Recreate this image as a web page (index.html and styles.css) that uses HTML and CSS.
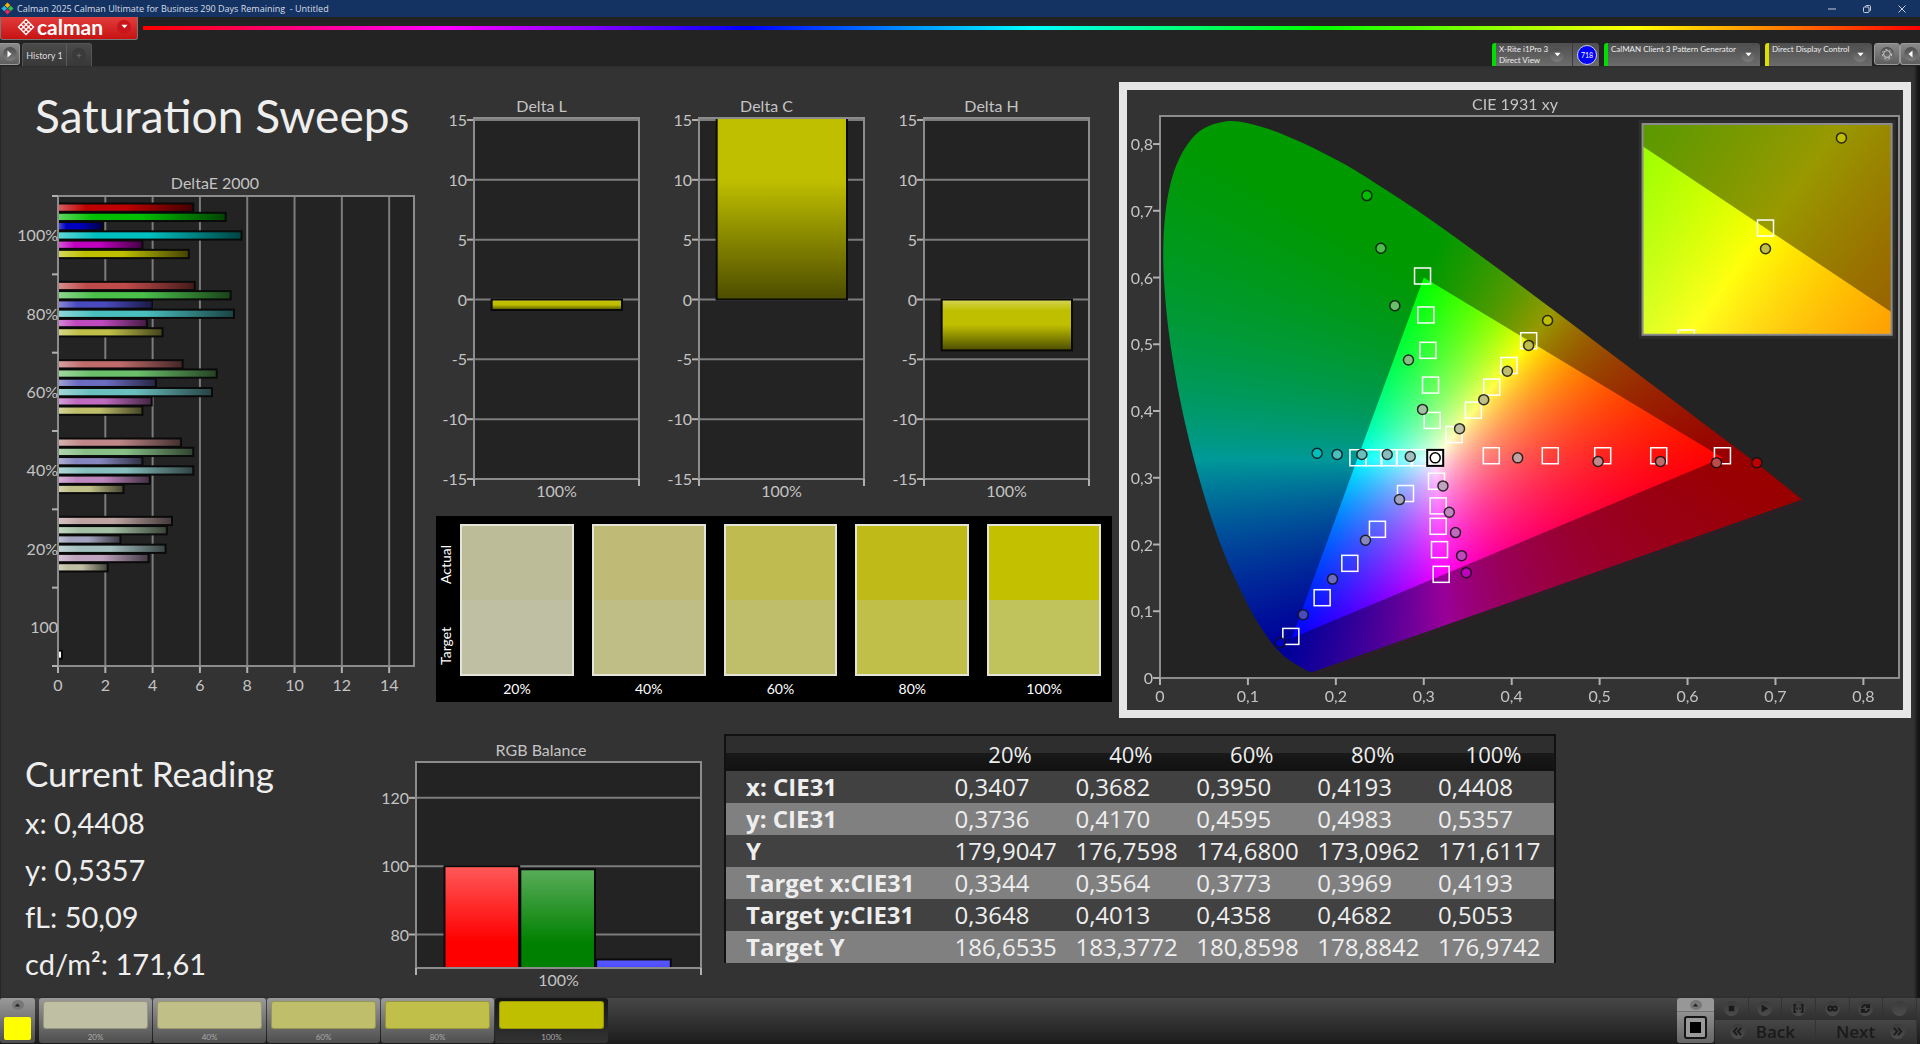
FILE: index.html
```
<!DOCTYPE html>
<html lang="en">
<head>
    <meta charset="UTF-8">
    <meta name="viewport" content="width=device-width, initial-scale=1.0">
    <title>Calman - Saturation Sweeps</title>
    <link rel="stylesheet" href="styles.css">
</head>
<body>
    <svg class="defs" aria-hidden="true">
        <defs>
            <linearGradient id="glossH" x1="0" y1="0" x2="1" y2="0">
                <stop offset="0" stop-color="#fff" stop-opacity="0.4"/>
                <stop offset="0.22" stop-color="#fff" stop-opacity="0"/>
                <stop offset="0.5" stop-color="#000" stop-opacity="0"/>
                <stop offset="1" stop-color="#000" stop-opacity="0.65"/>
            </linearGradient>
            <linearGradient id="glossV" x1="0" y1="0" x2="0" y2="1">
                <stop offset="0" stop-color="#fff" stop-opacity="0.35"/>
                <stop offset="0.22" stop-color="#fff" stop-opacity="0"/>
                <stop offset="0.5" stop-color="#000" stop-opacity="0"/>
                <stop offset="1" stop-color="#000" stop-opacity="0.6"/>
            </linearGradient>
        </defs>
    </svg>

    <header>
        <div class="titlebar">
            <svg class="app-icon" viewBox="0 0 14 14" aria-hidden="true">
                <path d="M7 0.500 10 3.500 7 6.500 4 3.500Z" fill="#f2b705"/>
                <path d="M10.500 4 13.500 7 10.500 10 7.500 7Z" fill="#2fc24a"/>
                <path d="M3.500 4 6.500 7 3.500 10 0.500 7Z" fill="#22b8e6"/>
                <path d="M7 7.500 10 10.500 7 13.500 4 10.500Z" fill="#e8265c"/>
            </svg>
            <span class="titlebar-text">Calman 2025 Calman Ultimate for Business 290 Days Remaining &nbsp;- Untitled</span>
            <div class="window-buttons">
                <button aria-label="Minimize"><svg viewBox="0 0 10 10"><path d="M1 5H9"/></svg></button>
                <button aria-label="Restore"><svg viewBox="0 0 10 10"><rect x="1.500" y="3" width="5.500" height="5.500" rx="1"/><path d="M3.500 3V2.500A1 1 0 0 1 4.500 1.500H7.500A1 1 0 0 1 8.500 2.500V6A1 1 0 0 1 7.500 7"/></svg></button>
                <button aria-label="Close"><svg viewBox="0 0 10 10"><path d="M1.500 1.500 8.500 8.500M8.500 1.500 1.500 8.500"/></svg></button>
            </div>
        </div>

        <div class="brand-row">
            <button class="brand">
                <svg class="brand-mark" viewBox="0 0 18 18" aria-hidden="true">
                    <path d="M9 0.500 17.500 9 9 17.500 0.500 9Z" fill="#fff"/>
                    <g fill="#dc2626">
                        <circle cx="9" cy="4" r="1.300"/><circle cx="6.500" cy="6.500" r="1.300"/><circle cx="11.500" cy="6.500" r="1.300"/>
                        <circle cx="4" cy="9" r="1.300"/><circle cx="9" cy="9" r="1.300"/><circle cx="14" cy="9" r="1.300"/>
                        <circle cx="6.500" cy="11.500" r="1.300"/><circle cx="11.500" cy="11.500" r="1.300"/><circle cx="9" cy="14" r="1.300"/>
                    </g>
                </svg>
                <span class="brand-name">calman</span>
                <span class="round round-red"><svg viewBox="0 0 8 5"><path d="M0.500 0.500H7.500L4 4.500Z"/></svg></span>
            </button>
            <div class="spectrum"></div>
        </div>

        <div class="tab-row">
            <button class="side-button" aria-label="Expand"><span class="round"><svg class="tall" viewBox="0 0 5 8"><path d="M0.500 0.500V7.500L4.500 4Z"/></svg></span></button>
            <nav class="tabs">
                <button class="tab">History 1</button>
                <button class="tab tab-add" aria-label="Add history"><span class="round round-dim">+</span></button>
            </nav>
            <div class="devices">
                <button class="device device-meter">
                    <span class="device-name">X-Rite i1Pro 3<br>Direct View</span>
                    <span class="round"><svg viewBox="0 0 8 5"><path d="M0.500 0.500H7.500L4 4.500Z"/></svg></span>
                </button>
                <span class="badge-box"><span class="badge">718</span></span>
                <button class="device device-source">
                    <span class="device-name">CalMAN Client 3 Pattern Generator</span>
                    <span class="round"><svg viewBox="0 0 8 5"><path d="M0.500 0.500H7.500L4 4.500Z"/></svg></span>
                </button>
                <button class="device device-display">
                    <span class="device-name">Direct Display Control</span>
                    <span class="round"><svg viewBox="0 0 8 5"><path d="M0.500 0.500H7.500L4 4.500Z"/></svg></span>
                </button>
                <button class="side-button gear" aria-label="Settings"><span class="round"><svg class="gear-icon" viewBox="0 0 12 12"><circle cx="6" cy="6" r="3.400"/><circle class="teeth" cx="6" cy="6" r="4.700"/></svg></span></button>
                <button class="side-button edge" aria-label="Collapse"><span class="round"><svg class="tall" viewBox="0 0 5 8"><path d="M4.500 0.500V7.500L0.500 4Z"/></svg></span></button>
            </div>
        </div>
    </header>

    <main class="workspace">
        <div class="row-top">
            <section class="sweeps">
                <h1>Saturation Sweeps</h1>
                <svg class="chart" id="deltaE"></svg>
            </section>

            <section class="deltas">
                <div class="delta-charts">
                    <svg class="chart" id="deltaL"></svg>
                    <svg class="chart" id="deltaC"></svg>
                    <svg class="chart" id="deltaH"></svg>
                </div>
                <div class="compare">
                    <div class="compare-labels"><span>Actual</span><span>Target</span></div>
                    <div class="compare-list" id="compareList"></div>
                </div>
            </section>

            <section class="cie">
                <canvas id="cieCanvas"></canvas>
                <svg class="chart" id="cieChart"></svg>
            </section>
        </div>

        <div class="row-bottom">
            <section class="reading">
                <h2>Current Reading</h2>
                <p>x: 0,4408</p>
                <p>y: 0,5357</p>
                <p>fL: 50,09</p>
                <p>cd/m²: 171,61</p>
            </section>

            <section class="balance">
                <svg class="chart" id="rgbBalance"></svg>
            </section>

            <table class="data">
                <thead>
                    <tr><td></td><th scope="col">20%</th><th scope="col">40%</th><th scope="col">60%</th><th scope="col">80%</th><th scope="col">100%</th></tr>
                </thead>
                <tbody>
                    <tr><th scope="row">x: CIE31</th><td>0,3407</td><td>0,3682</td><td>0,3950</td><td>0,4193</td><td>0,4408</td></tr>
                    <tr><th scope="row">y: CIE31</th><td>0,3736</td><td>0,4170</td><td>0,4595</td><td>0,4983</td><td>0,5357</td></tr>
                    <tr><th scope="row">Y</th><td>179,9047</td><td>176,7598</td><td>174,6800</td><td>173,0962</td><td>171,6117</td></tr>
                    <tr><th scope="row">Target x:CIE31</th><td>0,3344</td><td>0,3564</td><td>0,3773</td><td>0,3969</td><td>0,4193</td></tr>
                    <tr><th scope="row">Target y:CIE31</th><td>0,3648</td><td>0,4013</td><td>0,4358</td><td>0,4682</td><td>0,5053</td></tr>
                    <tr><th scope="row">Target Y</th><td>186,6535</td><td>183,3772</td><td>180,8598</td><td>178,8842</td><td>176,9742</td></tr>
                </tbody>
            </table>
        </div>
    </main>

    <footer>
        <button class="current-color" aria-label="Current colour">
            <span class="mini-up"><svg viewBox="0 0 8 5"><path d="M0.500 4.500H7.500L4 0.500Z"/></svg></span>
            <span class="current-swatch"></span>
        </button>
        <div class="levels" id="levels"></div>
        <div class="transport">
            <button class="pattern" aria-label="Pattern window">
                <span class="mini-up"><svg viewBox="0 0 8 5"><path d="M0.500 4.500H7.500L4 0.500Z"/></svg></span>
                <span class="pattern-icon"></span>
            </button>
            <div class="transport-grid">
                <button aria-label="Stop"><span class="knob"><svg viewBox="0 0 12 12"><path d="M3 3H9V9H3Z"/></svg></span></button>
                <button aria-label="Play"><span class="knob"><svg viewBox="0 0 12 12"><path d="M3 2 10 6 3 10Z"/></svg></span></button>
                <button aria-label="Read series"><span class="knob"><svg class="line" viewBox="0 0 12 12"><path d="M3.500 2H1.500V10H3.500M8.500 2H10.500V10H8.500M3.500 6H5M7 6H8.500"/></svg></span></button>
                <button aria-label="Continuous"><span class="knob"><svg class="line" viewBox="0 0 12 12"><circle cx="3.500" cy="6" r="2.200"/><circle cx="8.500" cy="6" r="2.200"/></svg></span></button>
                <button aria-label="Refresh"><span class="knob"><svg class="line" viewBox="0 0 12 12"><path d="M2 5.500A4 4 0 0 1 9 3.500M10 1V4.500H6.500M10 6.500A4 4 0 0 1 3 8.500M2 11V7.500H5.500"/></svg></span></button>
                <button aria-label="Record"><span class="knob"></span></button>
                <button class="step"><span class="knob"><svg class="line" viewBox="0 0 12 12"><path d="M5.500 2 2 6 5.500 10M10 2 6.500 6 10 10"/></svg></span>Back</button>
                <button class="step">Next<span class="knob"><svg class="line" viewBox="0 0 12 12"><path d="M2 2 5.500 6 2 10M6.500 2 10 6 6.500 10"/></svg></span></button>
            </div>
        </div>
    </footer>

    <script src="charts.js"></script>
</body>
</html>
```
FILE: styles.css
```
:root {
    --bg: #333;
    --bg-dark: #232323;
    --label: #c4c4c4;
    --text: #eee;
}

* {
    margin: 0;
    padding: 0;
    box-sizing: border-box;
}

body {
    display: flex;
    flex-direction: column;
    height: 100vh;
    min-height: 900px;
    background: var(--bg);
    color: var(--text);
    font-family: Lato, "Open Sans", sans-serif;
}

button {
    border: none;
    background: none;
    color: inherit;
    font-family: inherit;
    cursor: pointer;
}

.defs {
    position: absolute;
    width: 0;
    height: 0;
}

/* window chrome */
header {
    flex: none;
    background: var(--bg-dark);
}

.titlebar {
    display: flex;
    align-items: center;
    height: 17px;
    padding-left: 1px;
    background: #143362;
    font: 9px "Open Sans", sans-serif;
    color: #d8dde6;
}

.app-icon {
    width: 13px;
    height: 13px;
    margin-right: 3px;
}

.window-buttons {
    display: flex;
    margin-left: auto;
    padding-right: 1px;
}

.window-buttons button {
    display: flex;
    align-items: center;
    justify-content: center;
    width: 35px;
    height: 17px;
}

.window-buttons svg {
    width: 10px;
    height: 10px;
    fill: none;
    stroke: #c8cfdb;
}

.brand-row {
    display: flex;
    height: 26px;
}

.brand {
    display: flex;
    align-items: center;
    width: 138px;
    height: 23px;
    padding: 0 6px 3px 16px;
    border: 1px solid #777;
    border-top: none;
    border-radius: 0 0 3px 3px;
    background: linear-gradient(#e23c3c, #c81212);
}

.brand-mark {
    width: 18px;
    height: 18px;
}

.brand-name {
    margin-left: 2px;
    font-size: 21px;
    line-height: 20px;
    font-weight: bold;
    color: #fff;
}

.spectrum {
    flex: 1;
    height: 4px;
    margin: 9px 0 0 5px;
    background: linear-gradient(90deg, #f00, #f0f 17%, #00f 34%, #0ff 50%, #0f0 66%, #ff0 84%, #f00);
}

.round {
    display: flex;
    flex: none;
    align-items: center;
    justify-content: center;
    width: 14px;
    height: 14px;
    border-radius: 50%;
    background: linear-gradient(#4c4c4c, #7d7d7d);
}

.round svg {
    width: 7px;
    height: 5px;
    fill: #fff;
}

.round svg.tall {
    width: 5px;
    height: 8px;
}

.round svg.gear-icon {
    width: 12px;
    height: 12px;
    fill: none;
    stroke: #ccc;
    stroke-width: 1;
}

.gear-icon .teeth {
    stroke-dasharray: 2 2;
}

.round-red {
    margin-left: auto;
    background: #c9151c;
}

.round-dim {
    background: #3a3a3a;
    color: #777;
    font-size: 10px;
}

.tab-row {
    display: flex;
    height: 23px;
}

.side-button {
    display: flex;
    align-items: center;
    justify-content: center;
    width: 20px;
    height: 22px;
    border: 1px solid #999;
    border-left: none;
    border-radius: 0 3px 3px 0;
    background: linear-gradient(#8a8a8a, #5e5e5e);
}

.side-button.gear {
    width: 26px;
    border-left: 1px solid #999;
    border-radius: 3px;
}

.side-button.edge {
    border-left: 1px solid #999;
    border-right: none;
    border-radius: 3px 0 0 3px;
}

.tabs {
    display: flex;
    margin-left: 2px;
    border: 1px solid #555;
    border-bottom: none;
    border-radius: 3px 3px 0 0;
    background: linear-gradient(#4a4a4a, #383838);
}

.tab {
    width: 43px;
    font-size: 9px;
    color: #ddd;
    white-space: nowrap;
}

.tab-add {
    display: flex;
    align-items: center;
    justify-content: center;
    width: 25px;
    border-left: 1px solid #5c5c5c;
}

.devices {
    display: flex;
    margin-left: auto;
}

.device {
    display: flex;
    align-items: center;
    height: 23px;
    border-left: 4px solid #0d0;
    border-radius: 3px 3px 0 0;
    background: linear-gradient(#4e4e4e, #6c6c6c);
    font-size: 8px;
    line-height: 11px;
    text-align: left;
    color: #eee;
}

.device-name {
    align-self: flex-start;
    flex: 1;
    padding: 1px 0 0 3px;
    white-space: nowrap;
}

.device .round {
    margin-right: 5px;
}

.device-meter {
    width: 80px;
    border-radius: 3px 0 0 0;
}

.device-meter .round {
    margin-right: 8px;
}

.device-source {
    width: 156px;
    margin: 0 5px;
}

.device-display {
    width: 107px;
    margin-right: 2px;
    border-color: #dd0;
}

.badge-box {
    display: flex;
    align-items: center;
    justify-content: center;
    width: 27px;
    padding-left: 2px;
    border-left: 1px solid #3c3c3c;
    border-radius: 0 3px 0 0;
    background: linear-gradient(#4e4e4e, #6c6c6c);
}

.badge {
    width: 20px;
    height: 20px;
    border: 1px solid #ccd;
    border-radius: 50%;
    background: #00f;
    font-size: 7px;
    line-height: 18px;
    text-align: center;
    color: #fff;
}

/* workspace */
.workspace {
    display: grid;
    flex: 1;
    grid-template-rows: minmax(0, 656fr) minmax(0, 276fr);
    min-height: 0;
    border-left: 1px solid #262626;
    box-shadow: inset -5px 0 3px -1px #151515;
}

.row-top {
    display: grid;
    grid-template-columns: minmax(0, 428fr) minmax(0, 690fr) minmax(0, 792fr);
    grid-template-rows: minmax(0, 1fr);
    padding-right: 9px;
}

.chart {
    display: block;
    width: 100%;
    height: 100%;
    font-size: 16px;
    fill: var(--label);
}

.sweeps,
.deltas {
    display: flex;
    flex-direction: column;
    min-height: 0;
}

.sweeps h1 {
    height: 94px;
    padding: 23px 0 0 34px;
    font-size: 46px;
    line-height: 54px;
    font-weight: normal;
    white-space: nowrap;
}

.sweeps .chart {
    flex: 1;
    height: 0;
}

.delta-charts {
    display: grid;
    flex: 450;
    grid-template-columns: repeat(3, 1fr);
    grid-template-rows: minmax(0, 1fr);
    min-height: 0;
    padding-right: 15px;
}

.compare {
    display: flex;
    flex: 178;
    margin: 0 7px 20px;
    padding: 8px 11px 0 0;
    background: #000;
    color: #fff;
}

.compare-labels {
    display: flex;
    flex-direction: row-reverse;
    justify-content: space-around;
    width: 24px;
    padding-top: 16px;
    font-size: 14px;
    line-height: 20px;
    writing-mode: vertical-rl;
    transform: rotate(180deg);
}

.compare-list {
    display: grid;
    flex: 1;
    grid-template-columns: repeat(5, 1fr);
    gap: 18px;
}

.compare-item {
    display: flex;
    flex-direction: column;
    font-size: 14px;
    line-height: 26px;
    text-align: center;
}

.compare-swatch {
    display: flex;
    flex: 1;
    flex-direction: column;
    border: 2px solid #e4e4d8;
}

.compare-swatch div {
    flex: 1;
}

.cie {
    position: relative;
    margin: 16px 0 4px;
    border: 8px solid #e6e6e6;
}

.cie canvas,
.cie .chart {
    position: absolute;
    inset: 0;
    width: 100%;
    height: 100%;
}

.row-bottom {
    display: grid;
    grid-template-columns: minmax(0, 368fr) minmax(0, 355fr) minmax(0, 832fr) minmax(0, 364fr);
    grid-template-rows: minmax(0, 1fr);
}

.reading {
    padding: 25px 0 0 24px;
}

.reading h2 {
    font-size: 35px;
    line-height: 52px;
    font-weight: normal;
}

.reading p {
    font-size: 29px;
    line-height: 47px;
}

.balance {
    padding-right: 11px;
}

.data {
    align-self: start;
    width: 100%;
    margin-top: 12px;
    border: 2px solid #111;
    border-bottom: none;
    border-collapse: separate;
    border-spacing: 0;
    table-layout: fixed;
    font: 24px "Open Sans", sans-serif;
}

.data tr {
    height: 32px;
    line-height: 32px;
}

.data thead tr {
    height: 35px;
    background: linear-gradient(#2e2e2e 50%, #191919 50%, #111);
}

.data thead td {
    width: 27%;
}

.data thead th {
    font-size: 22px;
    font-weight: normal;
}

.data tbody tr {
    background: #414141;
}

.data tbody tr:nth-child(even) {
    background: #808080;
}

.data tbody th {
    padding-left: 20px;
    font-size: 24px;
    text-align: left;
    white-space: nowrap;
}

.data tbody td {
    padding-left: 5px;
}

/* bottom bar */
footer {
    display: flex;
    flex: none;
    height: 46px;
    padding-right: 3px;
    background: linear-gradient(#474747, #1c1c1c);
}

.current-color,
.level {
    border-radius: 3px;
    background: linear-gradient(#9a9a9a, #4e4e4e);
}

.current-color {
    display: flex;
    flex-direction: column;
    align-items: center;
    width: 35px;
    height: 45px;
    margin-right: 4px;
    padding-top: 2px;
}

.mini-up {
    display: flex;
    align-items: center;
    justify-content: center;
    width: 12px;
    height: 10px;
    border-radius: 50%;
    background: #777;
}

.mini-up svg {
    width: 7px;
    height: 4px;
    fill: #222;
}

.current-swatch {
    width: 27px;
    height: 23px;
    margin-top: 7px;
    border-radius: 2px;
    background: #ff0;
}

.levels {
    display: flex;
    gap: 1px;
}

.level {
    width: 113px;
    height: 45px;
    padding: 3px 4px 0;
    font-size: 8px;
    line-height: 16px;
    color: #aaa;
}

.level-color {
    display: block;
    height: 28px;
    border: 1px solid rgba(0, 0, 0, 0.2);
    border-radius: 3px;
}

.level.active {
    background: linear-gradient(#151515, #333);
}

.transport {
    display: flex;
    margin-left: auto;
}

.pattern {
    display: flex;
    flex-direction: column;
    align-items: center;
    width: 37px;
    height: 45px;
    margin-right: 1px;
    padding-top: 2px;
    border-radius: 3px;
    background: linear-gradient(#979797 13px, #555 13px, #909090 14px, #656565);
}

.pattern-icon {
    width: 23px;
    height: 23px;
    margin-top: 6px;
    border: 2px solid #151515;
    border-radius: 3px;
    background: linear-gradient(#000, #000) center / 11px 11px no-repeat #999;
}

.transport-grid {
    display: grid;
    grid-template-columns: repeat(6, 1fr);
    grid-template-rows: 22px 24px;
    width: 202px;
}

.transport-grid button {
    display: flex;
    align-items: center;
    justify-content: center;
    border-right: 1px solid #333;
    border-bottom: 1px solid #303030;
    background: linear-gradient(#464646, #303030);
}

.transport-grid .step {
    grid-column: span 3;
    justify-content: space-between;
    padding: 0 20px 0 15px;
    font: 600 17px "Open Sans", sans-serif;
    color: #1a1a1a;
}

.transport-grid .step:last-child {
    padding: 0 11px 0 20px;
}

.knob {
    display: flex;
    align-items: center;
    justify-content: center;
    width: 15px;
    height: 15px;
    border-radius: 50%;
    background: linear-gradient(#3a3a3a, #4c4c4c);
}

.knob svg {
    width: 11px;
    height: 11px;
    fill: #1a1a1a;
}

.knob svg.line {
    fill: none;
    stroke: #1a1a1a;
    stroke-width: 2;
}
```
FILE: charts.js
```
const levels = [20, 40, 60, 80, 100];

// per level: red, green, blue, cyan, magenta, yellow
const deltaE = {
    100: [5.72, 7.09, 1.9, 7.76, 3.57, 5.53],
    80: [5.78, 7.3, 4.0, 7.44, 3.76, 4.42],
    60: [5.27, 6.71, 4.14, 6.51, 3.96, 3.57],
    40: [5.2, 5.72, 3.57, 5.72, 3.88, 2.77],
    20: [4.82, 4.6, 2.64, 4.55, 3.83, 2.1]
};
const channels = [[1, 0, 0], [0, 1, 0], [0, 0, 1], [0, 1, 1], [1, 0, 1], [1, 1, 0]];
const lows = { 100: 0, 80: 74, 60: 107, 40: 135, 20: 163 };

const compare = [
    ['#bcbc98', '#bfbfa3'],
    ['#bfba76', '#bfbe87'],
    ['#bfbb50', '#bfbf6b'],
    ['#bfba17', '#bfbf4a'],
    ['#c3c000', '#c0c35c']
];

const targets = [
    [.3768, .333], [.4439, .333], [.5035, .333], [.5672, .333], [.6397, .333],
    [.3096, .3859], [.3077, .4389], [.3047, .4909], [.3024, .5439], [.2986, .6023],
    [.2792, .2764], [.2473, .2228], [.2159, .1718], [.1844, .1203], [.1488, .0623],
    [.2948, .330], [.2781, .330], [.2607, .330], [.2433, .330], [.2251, .330],
    [.3145, .2948], [.3164, .2578], [.3164, .2273], [.3179, .1923], [.3198, .1553],
    [.3344, .3648], [.3564, .4013], [.3773, .4358], [.3969, .4682], [.4193, .5053]
];

// measured points, same order as channels, 20% first
const measured = [
    [[.4068, .3298], [.4983, .3245], [.5692, .3245], [.6329, .3226], [.6788, .3226]],
    [[.2986, .4024], [.2826, .4764], [.2671, .5578], [.2512, .6439], [.2353, .7228]],
    [[.2724, .2673], [.2337, .2063], [.1962, .1482], [.1628, .0948], [.1366, .0528]],
    [[.2846, .3319], [.2584, .3349], [.2296, .3349], [.2015, .3349], [.1787, .3368]],
    [[.3218, .2878], [.3290, .2483], [.3361, .2179], [.3430, .1833], [.3483, .1578]],
    [[.3407, .3736], [.3682, .4170], [.3950, .4595], [.4193, .4983], [.4408, .5357]]
];

const locus = [
    [.1727, .0087], [.1689, .0100], [.1644, .0130], [.1566, .0190], [.1440, .0297], [.1355, .0399],
    [.1241, .0578], [.1096, .0868], [.0913, .1327], [.0687, .2007], [.0454, .2950],
    [.0235, .4127], [.0082, .5384], [.0039, .6548], [.0139, .7502], [.0389, .8120],
    [.0743, .8338], [.1142, .8262], [.1547, .8059], [.1929, .7816], [.2296, .7543],
    [.3016, .6923], [.3731, .6245], [.4441, .5547], [.5125, .4866], [.5752, .4242],
    [.6270, .3725], [.6658, .3340], [.6915, .3083], [.7303, .2675]
];
const gamut = [[.64, .33], [.3, .6], [.15, .06]];

function shade(channel, level) {
    return `rgb(${channel.map(c => c ? 191 : lows[level]).join(',')})`;
}

function line(x1, y1, x2, y2, color = '#7c7c7c', width = 2) {
    return `<line x1="${x1}" y1="${y1}" x2="${x2}" y2="${y2}" stroke="${color}" stroke-width="${width}"/>`;
}

function text(x, y, label, anchor = 'middle') {
    return `<text x="${x}" y="${y + 5}" text-anchor="${anchor}">${label}</text>`;
}

function bar(x, y, w, h, color, gloss) {
    return `<rect x="${x}" y="${y}" width="${w}" height="${h}" fill="${color}"/>
        <rect x="${x}" y="${y}" width="${w}" height="${h}" fill="${gloss ? `url(#${gloss})` : 'none'}" stroke="#0a0a0a" stroke-width="2"/>`;
}

function plotBox(svg, m) {
    const w = svg.clientWidth, h = svg.clientHeight;
    return { left: m.left, top: m.top, right: w - m.right, bottom: h - m.bottom, mid: w / 2,
        width: w - m.left - m.right, height: h - m.top - m.bottom };
}

function plotRect(b, fill = '#232323') {
    return `<rect x="${b.left}" y="${b.top}" width="${b.width}" height="${b.height}" fill="${fill}"`;
}

function clipTo(id, b) {
    return `<clipPath id="${id}">${plotRect(b)}/></clipPath>`;
}

function drawDeltaE() {
    const svg = document.getElementById('deltaE');
    const b = plotBox(svg, { left: 57, right: 15, top: 36, bottom: 56 });
    const unit = b.width / 15.05;
    const group = b.height / 6;
    const step = group / 8.45;
    let out = plotRect(b) + '/>' + clipTo('clipE', b) + text(b.mid, 24, 'DeltaE 2000');

    for (let v = 0; v <= 14; v += 2) {
        const x = b.left + v * unit;
        out += line(x, b.top, x, b.bottom) + line(x, b.bottom, x, b.bottom + 7, '#b0b0b0');
        out += text(x, b.bottom + 20, v);
    }

    out += '<g clip-path="url(#clipE)">';
    [100, 80, 60, 40, 20].forEach((level, g) => {
        deltaE[level].forEach((v, i) => {
            const y = b.top + g * group + 7.5 + i * step;
            out += bar(b.left - 2, y, v * unit + 2, step - 1, shade(channels[i], level), 'glossH');
        });
    });
    out += bar(b.left, b.top + 5 * group + 63, 4, 8, '#fff');
    out += '</g>' + plotRect(b, 'none') + ' stroke="#8c8c8c" stroke-width="2"/>';

    ['100%', '80%', '60%', '40%', '20%', '100'].forEach((label, g) => {
        out += text(b.left, b.top + (g + 0.5) * group + 1, label, 'end');
    });
    for (let g = 0; g <= 6; g++) {
        out += line(b.left - 6, b.top + g * group, b.left, b.top + g * group, '#b0b0b0');
    }
    svg.innerHTML = out;
}

function drawDelta(id, title, value) {
    const svg = document.getElementById(id);
    const b = plotBox(svg, { left: 45, right: 15, top: 52, bottom: 37 });
    const top = b.top + 2;
    const unit = (b.bottom - top) / 30;
    const zero = top + 15 * unit;
    let out = plotRect(b) + '/>' + clipTo('clip' + id, b) + text(b.mid, 41, title);

    for (let v = -15; v <= 15; v += 5) {
        const y = zero - v * unit;
        out += line(b.left, y, b.right, y) + line(b.left - 7, y, b.left, y, '#b0b0b0');
        out += text(b.left - 7, y + 1, v, 'end');
    }

    const height = Math.abs(value) * unit;
    out += `<g clip-path="url(#clip${id})">` +
        bar(b.left + b.width * 0.107, value > 0 ? zero - height : zero, b.width * 0.79, height, '#bfbf00', 'glossV') + '</g>';
    out += plotRect(b, 'none') + ' stroke="#8c8c8c" stroke-width="2"/>';
    out += line(b.left, b.bottom, b.left, b.bottom + 7, '#b0b0b0') + line(b.right, b.bottom, b.right, b.bottom + 7, '#b0b0b0');
    out += text(b.left + b.width / 2, b.bottom + 13, '100%');
    svg.innerHTML = out;
}

function drawBalance() {
    const svg = document.getElementById('rgbBalance');
    const b = plotBox(svg, { left: 47, right: 12, top: 40, bottom: 30 });
    const unit = b.height / 60.3;
    const toY = v => b.bottom - (v - 70.2) * unit;
    let out = plotRect(b) + '/>' + clipTo('clipB', b) + text(b.mid, 29, 'RGB Balance');

    [120, 100, 80].forEach(v => {
        out += line(b.left, toY(v), b.right, toY(v)) + line(b.left - 7, toY(v), b.left, toY(v), '#b0b0b0');
        out += text(b.left - 7, toY(v) + 1, v, 'end');
    });

    out += '<g clip-path="url(#clipB)">';
    [[100, '#f00'], [99.1, '#008000'], [72.7, '#00f']].forEach(([v, color], i) => {
        out += bar(b.left + b.width * (0.1 + i * 0.266), toY(v), b.width * 0.262, v * unit, color, 'glossV');
    });
    out += '</g>' + plotRect(b, 'none') + ' stroke="#8c8c8c" stroke-width="2"/>';
    out += line(b.left, b.bottom, b.left, b.bottom + 7, '#b0b0b0') + line(b.right, b.bottom, b.right, b.bottom + 7, '#b0b0b0');
    out += text(b.left + b.width / 2, b.bottom + 13, '100%');
    svg.innerHTML = out;
}

// chromaticity colour, brightest channel at full scale
function xyToRgb(x, y) {
    const X = x / y, Z = (1 - x - y) / y;
    const rgb = [
        3.2406 * X - 1.5372 - 0.4986 * Z,
        -0.9689 * X + 1.8758 + 0.0415 * Z,
        0.0557 * X - 0.2040 + 1.0570 * Z
    ].map(c => Math.max(c, 0));
    const max = Math.max(...rgb);
    return rgb.map(c => c / max * 255);
}

function colorField(box, view, gain) {
    const canvas = document.createElement('canvas');
    const w = canvas.width = Math.ceil(box.width);
    const h = canvas.height = Math.ceil(box.height);
    const ctx = canvas.getContext('2d');
    const image = ctx.createImageData(w, h);
    for (let j = 0; j < h; j++) {
        for (let i = 0; i < w; i++) {
            const rgb = xyToRgb(view.x0 + i / box.width * view.w, Math.max(view.y0 + (1 - j / box.height) * view.h, 0.0001));
            const p = (j * w + i) * 4;
            image.data[p] = rgb[0] * gain;
            image.data[p + 1] = rgb[1] * gain;
            image.data[p + 2] = rgb[2] * gain;
            image.data[p + 3] = 255;
        }
    }
    ctx.putImageData(image, 0, 0);
    return canvas;
}

function project(box, view, [x, y]) {
    return [box.left + (x - view.x0) / view.w * box.width, box.bottom - (y - view.y0) / view.h * box.height];
}

function curve(ctx, pts) {
    ctx.moveTo(...pts[0]);
    for (let i = 0; i < pts.length - 1; i++) {
        const a = pts[Math.max(i - 1, 0)], p = pts[i], q = pts[i + 1], d = pts[Math.min(i + 2, pts.length - 1)];
        ctx.bezierCurveTo(p[0] + (q[0] - a[0]) / 6, p[1] + (q[1] - a[1]) / 6,
            q[0] - (d[0] - p[0]) / 6, q[1] - (d[1] - p[1]) / 6, q[0], q[1]);
    }
    ctx.closePath();
}

function paintDiagram(ctx, box, view) {
    ctx.save();
    ctx.beginPath();
    ctx.rect(box.left, box.top, box.width, box.height);
    ctx.clip();
    ctx.beginPath();
    curve(ctx, locus.map(p => project(box, view, p)));
    ctx.clip();
    ctx.drawImage(colorField(box, view, 0.6), box.left, box.top);
    ctx.beginPath();
    gamut.forEach(p => ctx.lineTo(...project(box, view, p)));
    ctx.clip();
    ctx.drawImage(colorField(box, view, 1), box.left, box.top);
    ctx.restore();
}

function markers(box, view) {
    let out = '';
    targets.forEach(p => {
        const [x, y] = project(box, view, p);
        out += `<rect x="${x - 8}" y="${y - 8}" width="16" height="16" fill="none" stroke="#fff" stroke-width="1.5"/>`;
    });
    measured.forEach((points, c) => points.forEach((p, i) => {
        const [x, y] = project(box, view, p);
        out += `<circle cx="${x}" cy="${y}" r="5" fill="${shade(channels[c], levels[i])}" stroke="#111" stroke-opacity="0.85" stroke-width="1.5"/>`;
    }));
    return out;
}

function drawCie() {
    const svg = document.getElementById('cieChart');
    const canvas = document.getElementById('cieCanvas');
    const b = plotBox(svg, { left: 33, right: 4, top: 26, bottom: 32 });
    const view = { x0: 0, y0: 0, w: 0.8405, h: 0.842 };
    const inset = { left: b.right - b.width * 0.347, top: b.top + 8, width: b.width * 0.337, height: b.height * 0.375 };
    inset.bottom = inset.top + inset.height;
    const zoom = { x0: 0.3845, y0: 0.4693, w: 0.0705, h: 0.0711 };

    canvas.width = svg.clientWidth;
    canvas.height = svg.clientHeight;
    const ctx = canvas.getContext('2d');
    ctx.fillStyle = '#232323';
    ctx.fillRect(b.left, b.top, b.width, b.height);
    paintDiagram(ctx, b, view);

    // line of purples
    ctx.strokeStyle = 'rgba(110, 0, 60, 0.35)';
    ctx.beginPath();
    ctx.moveTo(...project(b, view, [.1741, .005]));
    ctx.lineTo(...project(b, view, [.7347, .2653]));
    ctx.stroke();

    ctx.fillStyle = '#2d2d2d';
    ctx.fillRect(inset.left - 4, inset.top - 4, inset.width + 8, inset.height + 8);
    paintDiagram(ctx, inset, zoom);

    let out = clipTo('clipInset', inset) + text(b.mid, 15, 'CIE 1931 xy');
    out += plotRect(b, 'none') + ' stroke="#8c8c8c" stroke-width="2"/>';
    for (let i = 0; i <= 8; i++) {
        const label = i ? '0,' + i : '0';
        const [x, y] = project(b, view, [i / 10, i / 10]);
        out += line(x, b.bottom, x, b.bottom + 7, '#b0b0b0') + text(x, b.bottom + 19, label);
        out += line(b.left - 7, y, b.left, y, '#b0b0b0') + text(b.left - 7, y + 1, label, 'end');
    }
    out += markers(b, view);

    const [wx, wy] = project(b, view, [.3130, .3298]);
    out += `<rect x="${wx - 8}" y="${wy - 8}" width="16" height="16" fill="#fff" stroke="#000" stroke-width="2"/>
        <circle cx="${wx}" cy="${wy}" r="5" fill="#fff" stroke="#000" stroke-width="1.5"/>`;

    out += `<g clip-path="url(#clipInset)">${markers(inset, zoom)}</g>`;
    out += plotRect(inset, 'none') + ' stroke="#8c8c8c" stroke-width="2"/>';
    svg.innerHTML = out;
}

function drawAll() {
    drawDeltaE();
    drawDelta('deltaL', 'Delta L', -0.88);
    drawDelta('deltaC', 'Delta C', 20);
    drawDelta('deltaH', 'Delta H', -4.25);
    drawBalance();
    drawCie();
}

document.getElementById('compareList').innerHTML = compare.map(([actual, target], i) => `
    <div class="compare-item">
        <div class="compare-swatch"><div style="background: ${actual}"></div><div style="background: ${target}"></div></div>
        ${levels[i]}%
    </div>`).join('');

document.getElementById('levels').innerHTML = levels.map(level => `
    <button class="level${level === 100 ? ' active' : ''}">
        <span class="level-color" style="background: ${shade([1, 1, 0], level)}"></span>${level}%
    </button>`).join('');

drawAll();
window.addEventListener('resize', drawAll);
```
